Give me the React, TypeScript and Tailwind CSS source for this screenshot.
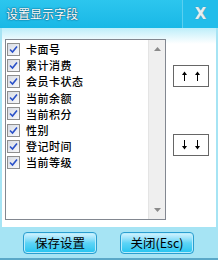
import { useState } from "react"

const fields = ["卡面号", "累计消费", "会员卡状态", "当前余额", "当前积分", "性别", "登记时间", "当前等级"]

function CheckBox({ checked, onClick }: { checked: boolean; onClick: () => void }) {
  return (
    <span
      onClick={onClick}
      className="flex h-[13px] w-[13px] shrink-0 items-center justify-center border border-[#8f8f8f] bg-gradient-to-br from-[#d8dce4] to-[#f8f8fa]"
    >
      {checked && (
        <svg width="9" height="9" viewBox="0 0 9 9">
          <path d="M1 4.5 L3.5 7 L8 1.5" fill="none" stroke="#2a50c8" strokeWidth="1.6" />
        </svg>
      )}
    </span>
  )
}

function Arrow({ down }: { down?: boolean }) {
  return (
    <svg width="5" height="10" viewBox="0 0 5 10" className={down ? "rotate-180" : ""}>
      <path d="M2.5 0.5 L0 4 H5 Z" fill="#000" />
      <path d="M2.5 3 V10" stroke="#000" strokeWidth="1" />
    </svg>
  )
}

export default function App() {
  const [checked, setChecked] = useState<boolean[]>(fields.map(() => true))

  return (
    <div className="flex h-[260px] w-[218px] flex-col border-b-2 border-[#5aa8c8] bg-[#a6e4f4] font-['Noto_Sans_CJK_SC',sans-serif] text-[12px] text-black">
      {/* 标题栏 */}
      <div className="flex h-[28px] shrink-0 items-stretch bg-gradient-to-b from-[#2cc6ee] to-[#18b8e6]">
        <div className="flex flex-1 items-center pl-[6px] text-[12px] text-white [text-shadow:0_0_2px_#0a4a6a,0_0_1px_#0a4a6a]">
          设置显示字段
        </div>
        <div className="flex w-[36px] items-center justify-center border-l border-[#5ad0f0] bg-[#22bdea] font-['DejaVu_Sans',sans-serif] text-[15px] font-bold text-[#e4eef2] [text-shadow:0_0_1px_#4a7a8a]">
          X
        </div>
      </div>

      {/* 内容 */}
      <div className="mx-[2px] flex h-[199px] shrink-0 bg-gradient-to-b from-[#bdeefa] via-white via-[8%] to-white px-[3px] pt-[11px]">
        <div className="flex h-[181px] w-[161px] border border-[#828790] bg-white">
          <div className="flex flex-1 flex-col pt-[1px]">
            {fields.map((f, i) => (
              <div key={f} className="flex h-[16.2px] items-center gap-[6px] pl-[1px] text-[11px] font-medium leading-[16px]">
                <CheckBox
                  checked={checked[i]}
                  onClick={() => setChecked(checked.map((c, j) => (j === i ? !c : c)))}
                />
                <span className="tracking-[0.5px]">{f}</span>
              </div>
            ))}
          </div>
          <div className="flex w-[17px] flex-col items-center justify-between border-l border-[#e4e4e4] bg-[#efefef] py-[7px]">
            <svg width="7" height="4" viewBox="0 0 7 4">
              <path d="M0 4 L3.5 0 L7 4 Z" fill="#8a8a8a" />
            </svg>
            <svg width="7" height="4" viewBox="0 0 7 4">
              <path d="M0 0 L3.5 4 L7 0 Z" fill="#8a8a8a" />
            </svg>
          </div>
        </div>

        <div className="flex flex-1 flex-col items-center pt-[26px] pl-[2px]">
          <button className="flex h-[22px] w-[36px] items-center justify-center gap-[8px] border border-[#666] bg-white">
            <Arrow />
            <Arrow />
          </button>
          <button className="mt-[47px] flex h-[22px] w-[36px] items-center justify-center gap-[8px] border border-[#666] bg-white">
            <Arrow down />
            <Arrow down />
          </button>
        </div>
      </div>

      {/* 底部按钮 */}
      <div className="flex flex-1 items-start gap-[23px] pl-[23px] pt-[5px]">
        <button className="flex h-[22px] w-[74px] items-center justify-center rounded-[4px] border border-[#2a9ed0] bg-gradient-to-b from-[#d4f4ff] via-[#5cd4f6] to-[#1cc4f0] text-[12.5px] shadow-[inset_0_0_0_1px_#b8ecfc]">
          保存设置
        </button>
        <button className="flex h-[22px] w-[74px] items-center justify-center rounded-[4px] border border-[#2a9ed0] bg-gradient-to-b from-[#d4f4ff] via-[#5cd4f6] to-[#1cc4f0] text-[12.5px] shadow-[inset_0_0_0_1px_#b8ecfc]">
          关闭(Esc)
        </button>
      </div>
    </div>
  )
}
